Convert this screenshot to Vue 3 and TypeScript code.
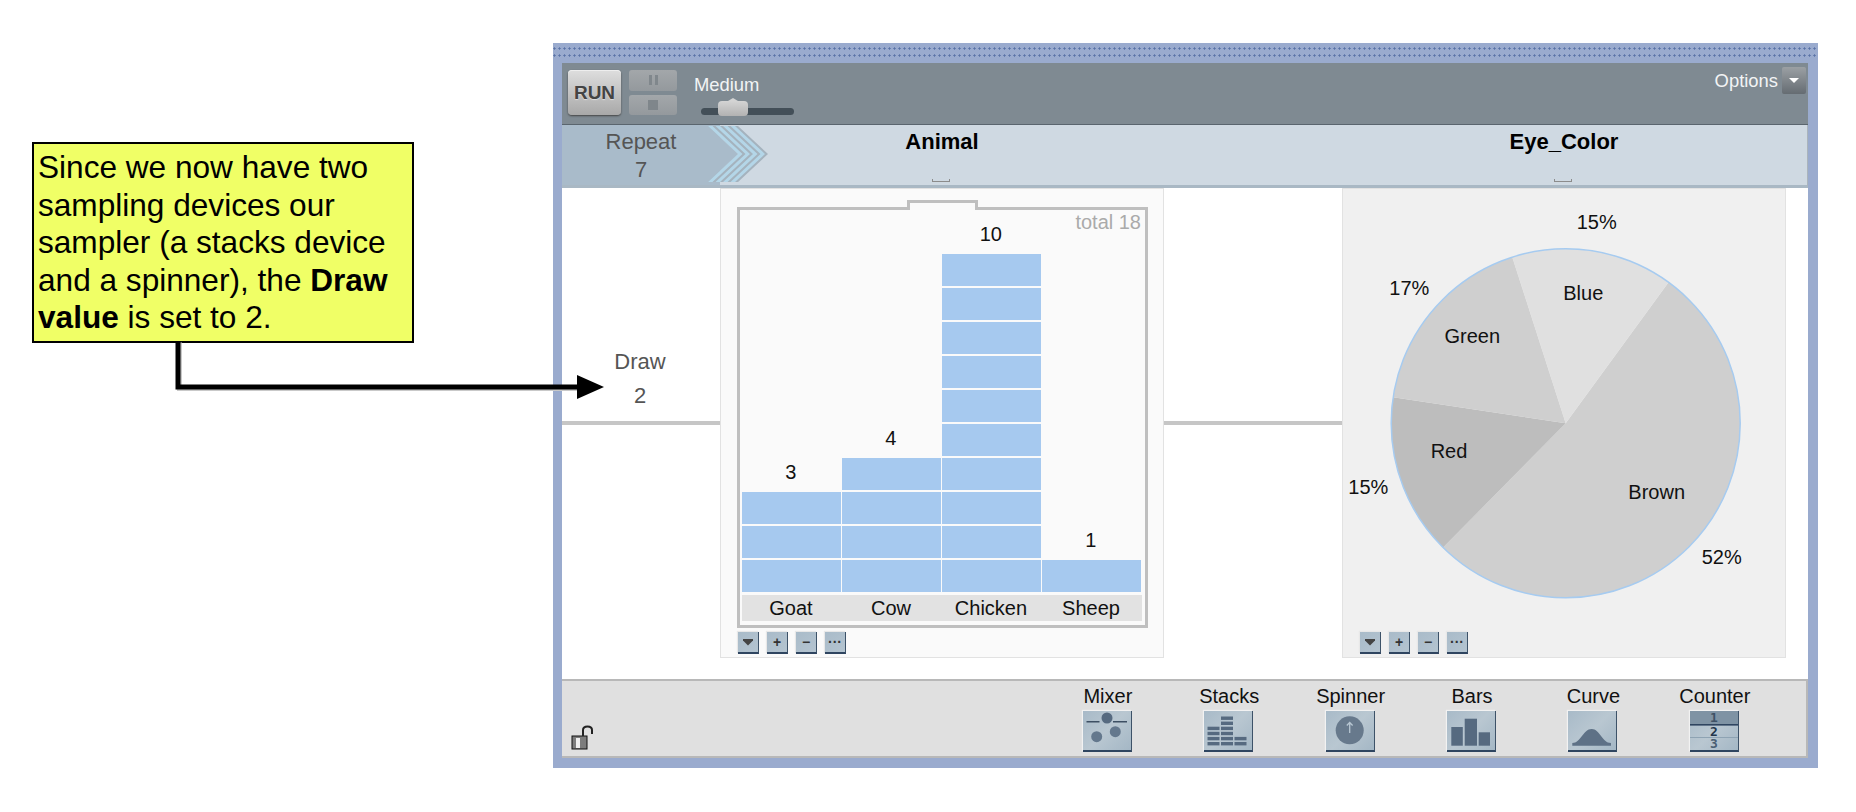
<template>
  <div class="page">
    <div class="sash">
      <div class="toolbar">
        <button class="run">RUN</button>
        <div class="transport">
          <div class="tbtn"><i class="bar"></i><i class="bar"></i></div>
          <div class="tbtn"><i class="square"></i></div>
        </div>
        <div class="speed">
          <span>Medium</span>
          <div class="track"><div class="thumb"></div></div>
        </div>
        <div class="options">
          <span>Options</span>
          <div class="optbtn"><i class="tri"></i></div>
        </div>
      </div>

      <div class="header">
        <div class="cell repeat">
          <span>Repeat</span>
          <span>7</span>
        </div>
        <div class="cell attr"><b>Animal</b><i class="bracket"></i></div>
        <div></div>
        <div class="cell attr"><b>Eye_Color</b><i class="bracket"></i></div>
        <svg class="chevrons" width="64" height="59" viewBox="0 0 64 59">
          <polygon points="0,1 0,57 30,29" fill="#a9bbca" />
          <polygon points="0,1 30,1 60,29 30,57 0,57 30,29" fill="#a5b3be" />
          <polygon
            v-for="o in [0, 7.5, 15, 22.5]"
            :key="o"
            :points="`${o},1 ${o + 4.5},1 ${o + 34.5},29 ${o + 4.5},57 ${o},57 ${o + 30},29`"
            fill="#b4d6e8"
          />
        </svg>
      </div>

      <div class="main">
        <div class="drawcol">
          <div class="drawtext">Draw</div>
          <div class="drawtext">2</div>
          <div class="wire"></div>
        </div>

        <div class="card">
          <div class="jar">
            <div class="notch"></div>
            <div class="total">total 18</div>
            <div class="chart">
              <div v-for="b in animals" :key="b.label" class="column">
                <div class="count">{{ b.count }}</div>
                <div v-for="n in b.count" :key="n" class="block"></div>
              </div>
            </div>
            <div class="labels">
              <span v-for="b in animals" :key="b.label">{{ b.label }}</span>
            </div>
          </div>
          <div class="tools">
            <div class="tool"><i class="menu"></i></div>
            <div v-for="t in tools" :key="t" class="tool">{{ t }}</div>
          </div>
        </div>

        <div class="midcol"><div class="wire"></div></div>

        <div class="card grey">
          <svg class="pie" width="444" height="444" viewBox="0 0 444 444">
            <path v-for="s in slices" :key="s.fill + s.d" :d="s.d" :fill="s.fill" />
            <circle :cx="CX" :cy="CY" :r="R" fill="none" stroke="#a6cbf0" stroke-width="1.5" />
            <text v-for="l in pieLabels" :key="l.text + l.x" :x="l.x" :y="l.y" text-anchor="middle">{{ l.text }}</text>
          </svg>
          <div class="tools">
            <div class="tool"><i class="menu"></i></div>
            <div v-for="t in tools" :key="t" class="tool">{{ t }}</div>
          </div>
        </div>
      </div>

      <div class="bottom">
        <svg class="lock" width="24" height="25" viewBox="0 0 24 25">
          <rect x="1" y="11" width="15" height="13" fill="#7c7c7c" stroke="#111" stroke-width="1" />
          <rect x="5" y="13" width="4" height="10" fill="#eee" />
          <path d="M12 11 V5 Q12 1.5 16.5 1.5 Q21 1.5 21 5 V9" fill="none" stroke="#222" stroke-width="2" />
        </svg>
        <div class="devices">
          <div v-for="d in devices" :key="d" class="device">
            <span>{{ d }}</span>
            <div class="tile">
              <svg width="48" height="38" viewBox="0 0 48 38">
                <g v-if="d === 'Mixer'" fill="#566a80">
                  <rect x="3.5" y="10" width="13" height="1.5" fill="#3d4f63" />
                  <rect x="30" y="10" width="14" height="1.5" fill="#3d4f63" />
                  <circle cx="24" cy="7" r="5.5" />
                  <circle cx="32.3" cy="20.7" r="5.5" fill="#64788d" />
                  <circle cx="13.7" cy="25.7" r="5.5" fill="#64788d" />
                </g>
                <g v-else-if="d === 'Stacks'" fill="#566a80">
                  <rect v-for="r in stackRows" :key="r.x + '-' + r.y" :x="r.x" :y="r.y" width="12" height="3.4" />
                </g>
                <g v-else-if="d === 'Spinner'">
                  <circle cx="23.7" cy="19.3" r="14" fill="#67798c" />
                  <path d="M23.7 22 V11.5 M20.8 14.5 L23.7 11.5 L26.6 14.5" fill="none" stroke="#b7c6d2" stroke-width="1.3" />
                </g>
                <g v-else-if="d === 'Bars'" fill="#566a80">
                  <rect x="4.3" y="16" width="11.5" height="18.7" />
                  <rect x="17.7" y="7.7" width="12.3" height="27" />
                  <rect x="31.7" y="21.3" width="11.3" height="13.4" />
                </g>
                <path
                  v-else-if="d === 'Curve'"
                  d="M4.3 34.7 V32 C13 32 15 18 23.7 18 C32 18 34 32 43 32 V34.7 Z"
                  fill="#5e7186"
                />
                <g v-else>
                  <rect x="0" y="0" width="48" height="13" fill="#7f93a4" />
                  <rect x="0" y="13" width="48" height="1.6" fill="#2f4560" />
                  <rect x="0" y="26" width="48" height="1" fill="#8ea3b3" />
                  <text x="24" y="11" class="digit" fill="#3f5266">1</text>
                  <text x="24" y="24.5" class="digit" fill="#22364c">2</text>
                  <text x="24" y="36.5" class="digit" fill="#4a5f74">3</text>
                </g>
              </svg>
            </div>
          </div>
        </div>
      </div>
    </div>

    <div class="note">
      Since we now have two<br />
      sampling devices our<br />
      sampler (a stacks device<br />
      and a spinner), the <b>Draw</b><br />
      <b>value</b> is set to 2.
    </div>
    <svg class="arrow" width="440" height="62" viewBox="0 0 440 62">
      <path d="M8 0 V46 H410" fill="none" stroke="#c9c9c9" stroke-width="5" transform="translate(1.5 1.5)" />
      <path d="M8 0 V46 H410" fill="none" stroke="#000" stroke-width="5" />
      <polygon points="407,34 434,46 407,58" fill="#000" />
    </svg>
  </div>
</template>

<script setup lang="ts">
interface Bar {
  label: string
  count: number
}

const animals: Bar[] = [
  { label: "Goat", count: 3 },
  { label: "Cow", count: 4 },
  { label: "Chicken", count: 10 },
  { label: "Sheep", count: 1 },
]

const tools = ["+", "−", "···"]

const devices = ["Mixer", "Stacks", "Spinner", "Bars", "Curve", "Counter"]

const CX = 223.7
const CY = 235.3
const R = 174.5

// edges of the pie read from the picture, as offsets from its centre
const edge = (dx: number, dy: number) => {
  const a = Math.atan2(dy, dx)
  return `${(CX + R * Math.cos(a)).toFixed(2)} ${(CY + R * Math.sin(a)).toFixed(2)}`
}
const slice = (from: number[], to: number[], large: number) =>
  `M${CX} ${CY} L${edge(from[0], from[1])} A${R} ${R} 0 ${large} 1 ${edge(to[0], to[1])} Z`

const blueBrown = [102.7, -140.7]
const redBrown = [-121.7, 123.3]
const greenRed = [-173, -26]
const blueGreen = [-53, -165]

const slices = [
  { d: slice(blueBrown, redBrown, 1), fill: "#cfcfcf" },
  { d: slice(redBrown, greenRed, 0), fill: "#bdbdbd" },
  { d: slice(greenRed, blueGreen, 0), fill: "#cfcfcf" },
  { d: slice(blueGreen, blueBrown, 0), fill: "#e0e0e0" },
]

const pieLabels = [
  { text: "15%", x: 254.7, y: 40.7 },
  { text: "17%", x: 67.3, y: 107.3 },
  { text: "Blue", x: 241.3, y: 112.3 },
  { text: "Green", x: 130.3, y: 154.7 },
  { text: "Red", x: 107, y: 270 },
  { text: "15%", x: 26.3, y: 305.7 },
  { text: "Brown", x: 314.7, y: 311.3 },
  { text: "52%", x: 379.7, y: 375.7 },
]

// stacks icon: 4, 6 and 2 rows
const stackRows: { x: number; y: number }[] = []
;[[3.5, 4], [17, 6], [30.5, 2]].forEach(([x, rows]) => {
  for (let i = 0; i < rows; i++) stackRows.push({ x, y: 31 - i * 5.1 })
})
</script>

<style scoped>
.page {
  position: relative;
  width: 1856px;
  height: 812px;
  padding: 43px 0 0 553px;
  box-sizing: border-box;
  font-family: "Liberation Sans", Arial, sans-serif;
  background: #fff;
  overflow: hidden;
}
.sash {
  width: 1265px;
  height: 725px;
  box-sizing: border-box;
  padding: 20px 10px 10px 9px;
  background-color: #9aabce;
  background-image:
    radial-gradient(circle at 1.5px 1.5px, #5a73a6 0.9px, transparent 1.3px),
    radial-gradient(circle at 1.5px 1.5px, #5a73a6 0.9px, transparent 1.3px);
  background-size: 5px 40px, 5px 40px;
  background-position: 10px 4px, 10px 11px;
  background-repeat: repeat-x;
}

.toolbar {
  display: flex;
  align-items: flex-start;
  height: 62px;
  box-sizing: border-box;
  padding: 7px 2px 0 6px;
  background: #7f8a92;
  border-bottom: 1px solid #5a656e;
  color: #f2f4f5;
  font-size: 18.4px;
}
.run {
  width: 53px;
  height: 45px;
  padding: 0;
  border: 0;
  border-radius: 4px;
  background: linear-gradient(#dedede, #a8a8a8);
  box-shadow: 0 1px 2px #444, inset 0 1px 0 #eee;
  color: #444;
  font: bold 19px "Liberation Sans", Arial, sans-serif;
  text-shadow: 0 1px 1px #ddd;
}
.transport {
  display: flex;
  flex-direction: column;
  gap: 4px;
  margin-left: 8px;
}
.tbtn {
  display: flex;
  align-items: center;
  justify-content: center;
  gap: 3px;
  width: 48px;
  height: 20.5px;
  border-radius: 3px;
  background: linear-gradient(#a3a7aa, #94999d);
}
.bar {
  width: 3px;
  height: 10px;
  background: #80878c;
}
.square {
  width: 10px;
  height: 10px;
  background: #7f868b;
}
.speed {
  margin-left: 17px;
  width: 100px;
}
.speed span {
  display: block;
  line-height: 22px;
  margin-top: 4px;
}
.track {
  position: relative;
  width: 93px;
  height: 7px;
  margin: 12px 0 0 7px;
  border-radius: 4px;
  background: #434f58;
}
.thumb {
  position: absolute;
  left: 17px;
  top: -7px;
  width: 30px;
  height: 15px;
  border-radius: 4px;
  background: linear-gradient(#d4d4d4, #b2b2b2);
}
.thumb::before {
  content: "";
  position: absolute;
  left: 10px;
  top: -3px;
  border: 5px solid transparent;
  border-top: 0;
  border-bottom: 3px solid #d4d4d4;
}
.options {
  display: flex;
  align-items: flex-start;
  gap: 4px;
  margin-left: auto;
  margin-top: -3px;
}
.options span {
  line-height: 28px;
}
.optbtn {
  display: flex;
  align-items: center;
  justify-content: center;
  width: 24px;
  height: 27px;
  border-radius: 2px;
  background: linear-gradient(#9ba0a4, #656c72);
}
.tri {
  border: 5px solid transparent;
  border-top: 5px solid #fff;
  border-bottom: 0;
}

.header {
  position: relative;
  display: grid;
  grid-template-columns: 158px 444px 178px 444px 21px;
  height: 63px;
  box-sizing: border-box;
  background: #cfd9e2;
  border-bottom: 3px solid #a9b8c4;
  border-right: 1px solid #aab4bc;
}
.cell {
  display: flex;
  flex-direction: column;
  align-items: center;
}
.repeat {
  padding-top: 3px;
  background: #a9bbca;
  color: #555;
  font-size: 22px;
  line-height: 28px;
}
.attr {
  padding-top: 3px;
  font-size: 22px;
  line-height: 27px;
  color: #000;
}
.bracket {
  width: 18px;
  height: 3px;
  margin: 24px 2px 0 0;
  border: 1px solid #8c8c8c;
  border-top: 0;
  box-sizing: border-box;
}
.chevrons {
  position: absolute;
  left: 146px;
  top: 0;
}

.main {
  display: grid;
  grid-template-columns: 158px 444px 178px 444px 22px;
  height: 491px;
  background: #fff;
}
.drawcol {
  padding: 157px 2px 0 0;
  text-align: center;
  color: #555;
  font-size: 22px;
}
.drawtext {
  line-height: 34px;
}
.wire {
  height: 4px;
  margin: 8px -2px 0 0;
  background: #c6c6c6;
}
.midcol {
  padding-top: 225px;
}
.midcol .wire {
  margin-right: 0;
}
.card {
  height: 470px;
  background: #fafafa;
  box-shadow: inset 0 0 0 1px #e2e2e2;
  padding-top: 19px;
  box-sizing: border-box;
}
.card.grey {
  padding-top: 0;
  background: #f0f0f0;
}
.card.grey .tools {
  margin-top: 0;
}
.jar {
  position: relative;
  display: flex;
  flex-direction: column;
  width: 411px;
  height: 421px;
  margin-left: 17px;
  box-sizing: border-box;
  padding: 0 3px 4px 2px;
  border: 3px solid #bfbfbf;
}
.notch {
  position: absolute;
  left: 167px;
  top: -10px;
  width: 71px;
  height: 10px;
  box-sizing: border-box;
  border: 3px solid #bfbfbf;
  border-bottom: 0;
  background: #fafafa;
}
.total {
  position: absolute;
  right: 4px;
  top: 0;
  color: #aaa;
  font-size: 20px;
  line-height: 24px;
}
.chart {
  display: flex;
  flex: 1;
  align-items: flex-end;
}
.column {
  display: flex;
  flex-direction: column;
  width: 100px;
  gap: 2px;
  padding-right: 1.5px;
  box-sizing: border-box;
}
.count {
  margin-bottom: 6px;
  padding-right: 1px;
  text-align: center;
  font-size: 20px;
  line-height: 23px;
  color: #111;
}
.block {
  height: 32px;
  background: #a6c9ef;
}
.labels {
  display: grid;
  grid-template-columns: repeat(4, 100px);
  height: 26px;
  margin-top: 3px;
  background: #e2e2e2;
  text-align: center;
  font-size: 20px;
  line-height: 26px;
  color: #111;
}
.labels span {
  padding-right: 2px;
}
.tools {
  display: flex;
  gap: 8px;
  margin: 4px 0 0 18px;
}
.tool {
  display: flex;
  align-items: center;
  justify-content: center;
  width: 21px;
  height: 22px;
  box-sizing: border-box;
  background: linear-gradient(135deg, #a9bbc9, #b4c4d0);
  border-bottom: 2px solid #2f4560;
  border-right: 1px solid #3d5268;
  box-shadow: -1px -1px 1px #e8e8e8;
  color: #333;
  font-size: 14px;
  font-weight: bold;
  line-height: 20px;
}
.menu {
  width: 10px;
  height: 7px;
  background-color: #444;
  clip-path: polygon(0 0, 100% 0, 100% 2px, 50% 100%, 0 2px);
}
.pie {
  display: block;
}
.pie text {
  font-size: 20px;
  fill: #111;
}

.bottom {
  display: flex;
  align-items: flex-start;
  height: 79px;
  box-sizing: border-box;
  background: #e0e0e0;
  border-top: 2px solid #b8b8b8;
  border-bottom: 2px solid #b8b8b8;
  border-right: 2px solid #b8b8b8;
}
.lock {
  margin: 44px 0 0 9px;
}
.devices {
  display: flex;
  margin-left: auto;
  margin-right: 31px;
}
.device {
  display: flex;
  flex-direction: column;
  align-items: center;
  width: 121.4px;
  font-size: 20px;
  line-height: 24px;
  color: #111;
  padding-top: 3px;
}
.device span {
  padding-left: 1px;
}
.tile {
  width: 49px;
  height: 41px;
  margin-top: 3px;
  box-sizing: border-box;
  background: linear-gradient(135deg, #a8bac8, #b9c7d1 50%, #a4b7c5);
  border-bottom: 2px solid #2f4560;
  border-right: 1px solid #3d5268;
  box-shadow: -1px -1px 1px #f2f2f2;
}
.tile svg {
  display: block;
}
.digit {
  font-family: "DejaVu Sans Mono", monospace;
  font-size: 13px;
  font-weight: bold;
  text-anchor: middle;
}

.note {
  position: absolute;
  left: 32px;
  top: 142px;
  width: 382px;
  height: 201px;
  box-sizing: border-box;
  padding: 5px 0 0 4px;
  border: 2px solid #000;
  background: #f0ff66;
  color: #000;
  font-size: 31.6px;
  line-height: 37.6px;
  white-space: nowrap;
}
.arrow {
  position: absolute;
  left: 170px;
  top: 341px;
}
</style>
